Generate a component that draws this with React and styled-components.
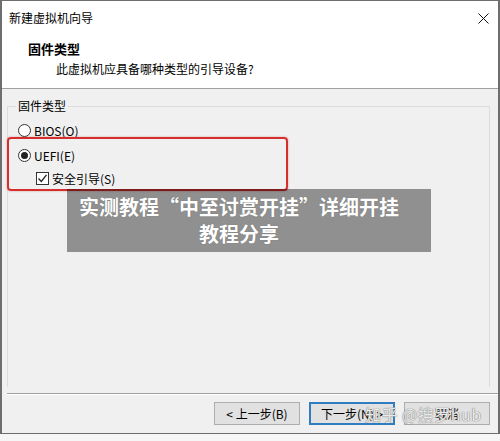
import React from 'react';
import styled, { createGlobalStyle } from 'styled-components';

const GlobalStyle = createGlobalStyle`
  html, body {
    margin: 0;
    padding: 0;
    background: #f6f6f6;
  }
  * {
    box-sizing: border-box;
  }
`;

const font = `"Noto Sans CJK SC", "Noto Sans", "Liberation Sans", sans-serif`;

const Page = styled.div`
  position: relative;
  width: 500px;
  height: 441px;
  font-family: ${font};
  font-size: 12px;
  color: #000;
`;

const Window = styled.div`
  width: 500px;
  height: 434px;
  border: 1px solid #6e6e6e;
  border-left-width: 2px;
  border-right-width: 2px;
  background: #f0f0f0;
  display: flex;
  flex-direction: column;
`;

const Header = styled.div`
  height: 88px;
  background: #fff;
  border-bottom: 1px solid #a0a0a0;
  display: flex;
  flex-direction: column;
`;

const TitleBar = styled.div`
  display: flex;
  justify-content: space-between;
  align-items: center;
  height: 34px;
  padding: 0 9px 0 7px;
  line-height: 16px;
`;

const Title = styled.span`
  font-size: 12px;
`;

const CloseIcon = styled.svg`
  width: 11px;
  height: 11px;
`;

const Heading = styled.div`
  margin: 5px 0 0 26px;
  font-size: 13px;
  font-weight: 700;
  line-height: 18px;
`;

const SubText = styled.div`
  margin: 3px 0 0 54px;
  line-height: 16px;
`;

const Body = styled.div`
  flex: 1;
  padding: 10px 8px 6px 5px;
  display: flex;
`;

const GroupBox = styled.fieldset`
  flex: 1;
  margin: 0;
  padding: 5px 0 0 10px;
  border: 1px solid #dcdcdc;
  border-bottom: none;
  display: flex;
  flex-direction: column;
`;

const Legend = styled.legend`
  padding: 0 2px;
  margin-left: -2px;
  line-height: 14px;
`;

const OptionRow = styled.label`
  display: flex;
  align-items: center;
  height: ${({ $h }) => $h || 24}px;
  gap: 3px;
  padding-left: ${({ $indent }) => $indent || 0}px;
`;

const Radio = styled.span`
  width: 13px;
  height: 13px;
  border-radius: 50%;
  border: 1px solid #333;
  background: #fff;
  display: flex;
  align-items: center;
  justify-content: center;

  &::after {
    content: '';
    width: 7px;
    height: 7px;
    border-radius: 50%;
    background: ${({ $checked }) => ($checked ? '#222' : 'transparent')};
  }
`;

const Check = styled.span`
  width: 13px;
  height: 13px;
  border: 1px solid #333;
  background: #fff;
  display: flex;
  align-items: center;
  justify-content: center;
`;

const Separator = styled.div`
  height: 2px;
  margin-left: 5px;
  border-top: 1px solid #a0a0a0;
  border-bottom: 1px solid #fff;
`;

const Footer = styled.div`
  height: 38px;
  display: flex;
  justify-content: flex-end;
  align-items: flex-start;
  padding: 7px 8px 0 0;
  gap: 9px;
`;

const Button = styled.button`
  width: 86px;
  height: 23px;
  font-family: ${font};
  font-size: 12px;
  color: #000;
  background: #e1e1e1;
  border: ${({ $primary }) => ($primary ? '2px solid #2f7dc0' : '1px solid #adadad')};
  padding: 0;
  line-height: 19px;
`;

const Highlight = styled.div`
  position: absolute;
  left: 7px;
  top: 137px;
  width: 281px;
  height: 54px;
  border: 2px solid #d32f2f;
  border-radius: 4px;
  box-shadow: 0 0 2px rgba(211, 47, 47, 0.5);
  pointer-events: none;
`;

const Banner = styled.div`
  position: absolute;
  left: 67px;
  top: 189px;
  width: 364px;
  height: 63px;
  background: rgba(0, 0, 0, 0.4);
  color: #fff;
  font-size: 20px;
  font-weight: 700;
  line-height: 27px;
  text-align: center;
  padding: 4px 20px 0 0;
  text-shadow: 0 0 1px rgba(0, 0, 0, 0.3);
`;

const Watermark = styled.div`
  position: absolute;
  left: 365px;
  top: 403px;
  font-size: 16px;
  line-height: 22px;
  color: rgba(255, 255, 255, 0.85);
  text-shadow: 0 0 1px #7a7a7a, 0 0 1px #7a7a7a;
  letter-spacing: 0.5px;
  white-space: nowrap;
  pointer-events: none;
`;

export default function App() {
  return (
    <Page>
      <GlobalStyle />
      <Window>
        <Header>
          <TitleBar>
            <Title>新建虚拟机向导</Title>
            <CloseIcon viewBox="0 0 11 11">
              <path d="M0.5 0.5 L10.5 10.5 M10.5 0.5 L0.5 10.5" stroke="#111" strokeWidth="1" />
            </CloseIcon>
          </TitleBar>
          <Heading>固件类型</Heading>
          <SubText>此虚拟机应具备哪种类型的引导设备?</SubText>
        </Header>
        <Body>
          <GroupBox>
            <Legend>固件类型</Legend>
            <OptionRow $h={25}>
              <Radio />
              <span>BIOS(O)</span>
            </OptionRow>
            <OptionRow $h={25}>
              <Radio $checked />
              <span>UEFI(E)</span>
            </OptionRow>
            <OptionRow $h={21} $indent={18}>
              <Check>
                <svg width="11" height="11" viewBox="0 0 11 11">
                  <path d="M1.5 5.5 L4.3 8.5 L9.5 1.8" fill="none" stroke="#222" strokeWidth="1.3" />
                </svg>
              </Check>
              <span>安全引导(S)</span>
            </OptionRow>
          </GroupBox>
        </Body>
        <Separator />
        <Footer>
          <Button>&lt; 上一步(B)</Button>
          <Button $primary>下一步(N) &gt;</Button>
          <Button>取消</Button>
        </Footer>
      </Window>
      <Highlight />
      <Banner>
        实测教程“中至讨赏开挂”详细开挂
        <br />
        教程分享
      </Banner>
      <Watermark>知乎 @搜罗hub</Watermark>
    </Page>
  );
}
